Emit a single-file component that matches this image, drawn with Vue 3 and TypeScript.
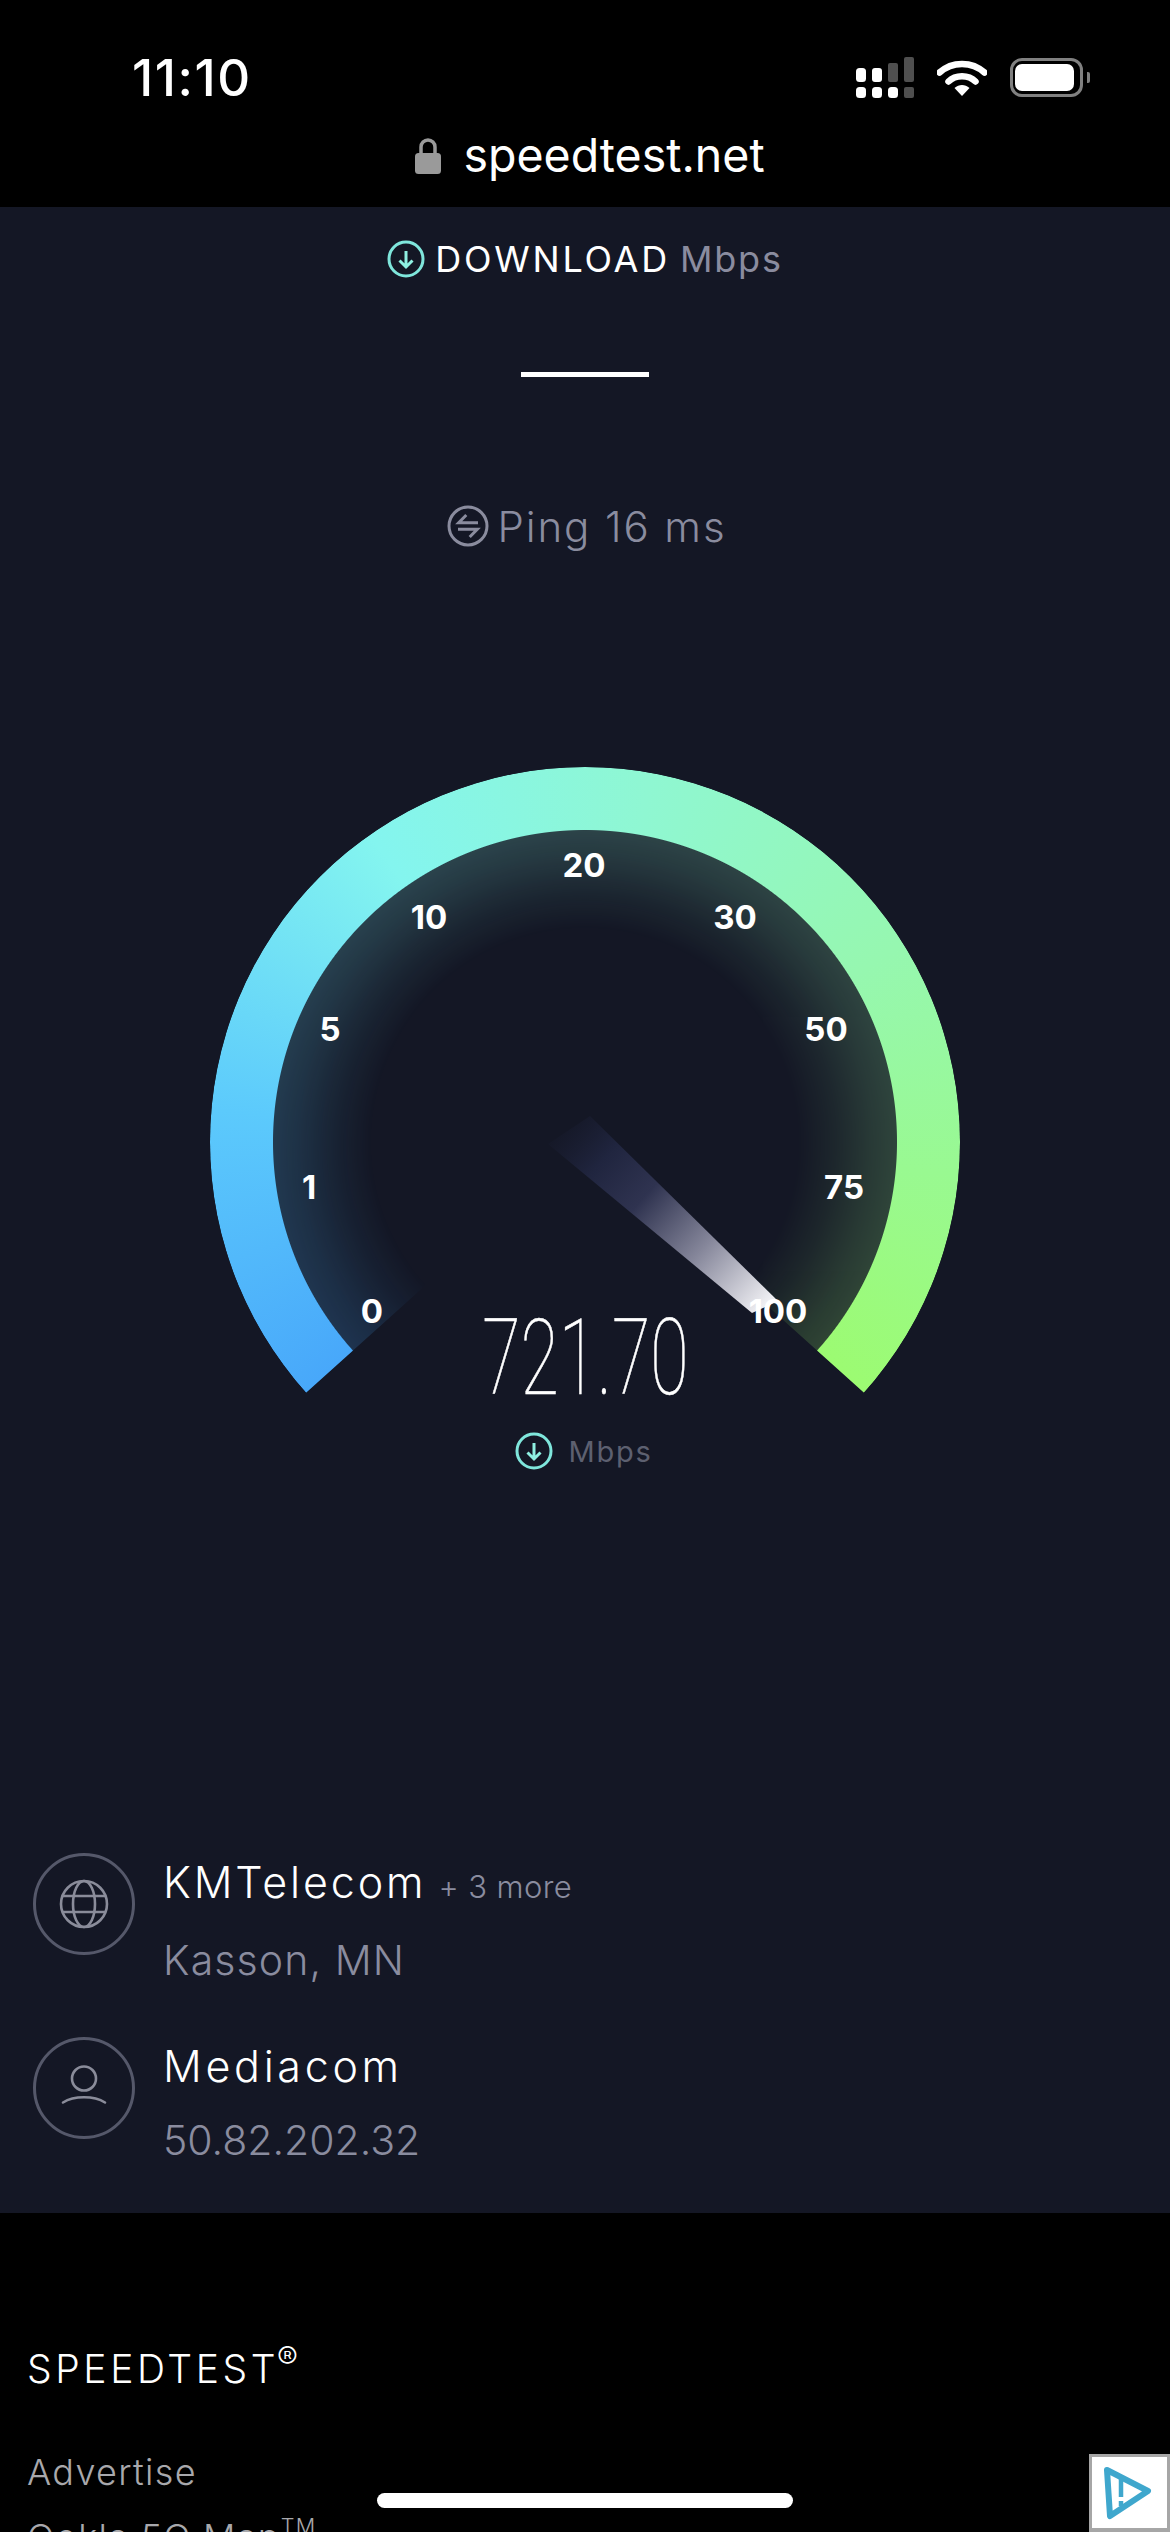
<script setup lang="ts">
import { computed } from 'vue'

interface Tick {
  text: string
  x: number
  y: number
}

// Scale labels, placed by their centre inside the 750px dial box.
const ticks: Tick[] = [
  { text: '0', x: 162, y: 544 },
  { text: '1', x: 99, y: 420 },
  { text: '5', x: 120, y: 262 },
  { text: '10', x: 219, y: 150 },
  { text: '20', x: 374, y: 98 },
  { text: '30', x: 525, y: 150 },
  { text: '50', x: 616, y: 262 },
  { text: '75', x: 634, y: 420 },
  { text: '100', x: 568, y: 544 },
]

const tickStyles = computed(() =>
  ticks.map((t) => ({ left: `${t.x}px`, top: `${t.y}px` })),
)
</script>

<template>
  <div class="screen">
    <header class="chrome">
      <div class="status">
        <span class="time">11:10</span>
        <div class="status-icons">
          <svg class="signal" width="58" height="41" viewBox="0 0 58 41">
            <rect x="0" y="11" width="10" height="14" rx="3.5" fill="#fff" />
            <rect x="16" y="11" width="10" height="14" rx="3" fill="#fff" />
            <rect x="32" y="6" width="10" height="19" rx="2" fill="#4f4f4f" />
            <rect x="48" y="0" width="10" height="25" rx="2" fill="#4f4f4f" />
            <rect x="0" y="30" width="10" height="11" rx="3.5" fill="#fff" />
            <rect x="16" y="30" width="10" height="11" rx="3.5" fill="#fff" />
            <rect x="32" y="30" width="10" height="11" rx="3.5" fill="#fff" />
            <rect x="48" y="30" width="10" height="11" rx="2" fill="#4f4f4f" />
          </svg>
          <svg class="wifi" width="50" height="36" viewBox="0 0 50 36">
            <path d="M2.5 12.5C15 1 35 1 47.5 12.5" fill="none" stroke="#fff" stroke-width="6.5" stroke-linecap="round" />
            <path d="M11.5 21.5C18.5 14.5 31.5 14.5 38.5 21.5" fill="none" stroke="#fff" stroke-width="6.5" stroke-linecap="round" />
            <path d="M17.5 28C22 24 28 24 32.5 28L25 36Z" fill="#fff" />
          </svg>
          <div class="battery">
            <div class="battery-shell"><div class="battery-level"></div></div>
            <div class="battery-nub"></div>
          </div>
        </div>
      </div>
      <div class="address">
        <svg width="26" height="36" viewBox="0 0 26 36">
          <path d="M6 16V9a7 7 0 0 1 14 0v7" fill="none" stroke="#9a9a9a" stroke-width="3.5" />
          <rect x="0" y="15" width="26" height="21" rx="3.5" fill="#9a9a9a" />
        </svg>
        <span>speedtest.net</span>
      </div>
    </header>

    <main class="panel">
      <div class="metric-title">
        <svg width="38" height="38" viewBox="-19 -19 38 38">
          <circle r="17" fill="none" stroke="#7fe6dc" stroke-width="3" />
          <path d="M0-8V8M-6.5 1.5 0 8l6.5-6.5" fill="none" stroke="#8ff0e2" stroke-width="3" />
        </svg>
        <span class="title-main">DOWNLOAD</span>
        <span class="title-unit">Mbps</span>
      </div>

      <div class="dash"></div>

      <div class="ping">
        <svg width="42" height="42" viewBox="-21 -21 42 42">
          <circle r="19" fill="none" stroke="#8a8c9e" stroke-width="3" />
          <path d="M10-3.3H-9.3L-1.7-11M-10 3.3H9.3L1.7 11" fill="none" stroke="#8a8c9e" stroke-width="3" />
        </svg>
        <span>Ping 16 ms</span>
      </div>

      <section class="gauge">
        <div class="dial">
          <div class="glow"></div>
          <div class="arc"></div>
          <svg class="needle" width="750" height="650" viewBox="0 0 750 650">
            <defs>
              <linearGradient id="needle-fade" gradientUnits="userSpaceOnUse" x1="345" y1="355" x2="552" y2="540">
                <stop offset="0" stop-color="#1b1f35" stop-opacity="0" />
                <stop offset="0.22" stop-color="#20253f" />
                <stop offset="0.42" stop-color="#2f3350" />
                <stop offset="0.7" stop-color="#85869a" />
                <stop offset="1" stop-color="#eeeef2" />
              </linearGradient>
            </defs>
            <polygon points="380,349 568,534 542,546 338,377" fill="url(#needle-fade)" />
          </svg>
          <span
            v-for="(tick, i) in ticks"
            :key="tick.text"
            class="tick"
            :style="tickStyles[i]"
          >{{ tick.text }}</span>
        </div>
        <div class="reading">721.70</div>
        <div class="reading-unit">
          <svg width="38" height="38" viewBox="-19 -19 38 38">
            <circle r="17" fill="none" stroke="#7fe6dc" stroke-width="3" />
            <path d="M0-8V8M-6.5 1.5 0 8l6.5-6.5" fill="none" stroke="#8ff0e2" stroke-width="3" />
          </svg>
          <span>Mbps</span>
        </div>
      </section>

      <section class="connection">
        <div class="conn-row">
          <div class="conn-icon">
            <svg width="50" height="50" viewBox="-25 -25 50 50" fill="none" stroke="#8a8c9a" stroke-width="2.6">
              <circle r="23" />
              <ellipse rx="11" ry="23" />
              <path d="M-21-8H21M-21 8H21" />
            </svg>
          </div>
          <div class="conn-text">
            <div class="conn-name">KMTelecom <small>+ 3 more</small></div>
            <div class="conn-sub">Kasson, MN</div>
          </div>
        </div>
        <div class="conn-row">
          <div class="conn-icon">
            <svg width="46" height="46" viewBox="-23 -23 46 46" fill="none" stroke="#8a8c9a" stroke-width="2.6">
              <circle cy="-9.5" r="12" />
              <path d="M-21 14.5C-10 7.5 10 7.5 21 14.5" stroke-linecap="round" />
            </svg>
          </div>
          <div class="conn-text">
            <div class="conn-name media">Mediacom</div>
            <div class="conn-sub address-ip">50.82.202.32</div>
          </div>
        </div>
      </section>
    </main>

    <footer class="site-footer">
      <div class="brand">SPEEDTEST<sup>®</sup></div>
      <a class="foot-link">Advertise</a>
      <a class="foot-link">Ookla 5G Map<sup>TM</sup></a>
    </footer>

    <div class="home-bar"></div>
    <div class="ad-badge">
      <svg width="52" height="54" viewBox="0 0 52 54" fill="none">
        <path d="M6 4 47 25 9 50Z" stroke="#3fa7cd" stroke-width="6" stroke-linejoin="round" />
        <path d="M20 13V31M20 35V40" stroke="#3fa7cd" stroke-width="4.5" />
      </svg>
    </div>
  </div>
</template>

<style scoped>
.screen {
  position: relative;
  width: 1170px;
  height: 2532px;
  overflow: hidden;
  background: #000;
  color: #fff;
  font-family: Inter, "Liberation Sans", sans-serif;
}

/* Browser chrome */
.chrome {
  height: 207px;
  display: flex;
  flex-direction: column;
}
.status {
  height: 126px;
  padding: 45px 80px 0 132px;
  box-sizing: border-box;
  display: flex;
  justify-content: space-between;
  align-items: flex-start;
}
.time {
  font-size: 51px;
  font-weight: 500;
  line-height: 66px;
  letter-spacing: 1.6px;
}
.status-icons {
  display: flex;
  align-items: flex-start;
  margin-top: 12px;
}
.wifi {
  margin: 3px 0 0 23px;
}
.battery {
  display: flex;
  align-items: center;
  margin: 1px 0 0 23px;
}
.battery-shell {
  width: 73px;
  height: 39px;
  box-sizing: border-box;
  border: 3px solid #808080;
  border-radius: 12px;
  padding: 3px 6px 3px 2px;
}
.battery-level {
  height: 100%;
  background: #fff;
  border-radius: 7px;
}
.battery-nub {
  width: 3px;
  height: 11px;
  margin-left: 4px;
  background: #808080;
  border-radius: 0 2px 2px 0;
}
.address {
  display: flex;
  justify-content: center;
  align-items: center;
  gap: 22px;
  font-size: 46.5px;
  line-height: 60px;
  margin-top: -1px;
  padding-left: 10px;
}
.address svg {
  margin-top: 2px;
}

/* Result panel */
.panel {
  height: 2006px;
  background: #141725;
  display: flex;
  flex-direction: column;
  align-items: center;
}
.metric-title {
  display: flex;
  align-items: center;
  margin-top: 30px;
  height: 44px;
  font-size: 36px;
  font-weight: 400;
  white-space: nowrap;
}
.metric-title svg {
  margin-right: 10px;
}
.title-main {
  letter-spacing: 2.75px;
}
.title-unit {
  color: #8a8c9f;
  margin-left: 10px;
  letter-spacing: 1.8px;
}
.dash {
  width: 128px;
  height: 5px;
  margin-top: 91px;
  background: #fff;
}
.ping {
  display: flex;
  align-items: center;
  gap: 9px;
  margin-top: 125px;
  height: 48px;
  padding-left: 3px;
  font-size: 42px;
  font-weight: 300;
  letter-spacing: 1.9px;
  color: #8a8c9f;
}

/* Gauge */
.gauge {
  width: 750px;
  height: 712px;
  margin-top: 217px;
  display: flex;
  flex-direction: column;
  align-items: center;
  position: relative;
}
.dial {
  position: absolute;
  left: 0;
  top: 0;
  width: 750px;
  height: 750px;
}
.arc,
.glow {
  position: absolute;
  inset: 0;
  border-radius: 50%;
  background: conic-gradient(
    from 225deg,
    #48a8fa 0deg,
    #48a8fa 3.3deg,
    #5ccafc 50deg,
    #84f5ef 100deg,
    #8ff7d2 145deg,
    #96f7b0 193deg,
    #9cfb72 266.7deg
  );
  clip-path: polygon(50% 50%, 0 712px, 0 0, 100% 0, 100% 712px);
}
.arc {
  -webkit-mask-image: radial-gradient(circle closest-side, transparent 311.5px, #000 312.5px);
  mask-image: radial-gradient(circle closest-side, transparent 311.5px, #000 312.5px);
}
.glow {
  opacity: 0.2;
  -webkit-mask-image: radial-gradient(
    circle closest-side,
    transparent 212px,
    rgba(0, 0, 0, 0.35) 250px,
    rgba(0, 0, 0, 0.75) 285px,
    #000 312px
  );
  mask-image: radial-gradient(
    circle closest-side,
    transparent 212px,
    rgba(0, 0, 0, 0.35) 250px,
    rgba(0, 0, 0, 0.75) 285px,
    #000 312px
  );
}
.needle {
  position: absolute;
  left: 0;
  top: 0;
}
.tick {
  position: absolute;
  transform: translate(-50%, -50%);
  font-size: 33px;
  font-weight: 700;
  line-height: 1;
}
.reading {
  margin-top: 549px;
  height: 84px;
  font-family: Roboto, "Liberation Sans", sans-serif;
  font-size: 106px;
  font-weight: 100;
  line-height: 84px;
  -webkit-text-stroke: 0.6px #fff;
  transform: scaleX(0.66);
  white-space: nowrap;
  position: relative;
}
.reading-unit {
  display: flex;
  align-items: center;
  gap: 15px;
  margin-top: 32px;
  height: 38px;
  font-size: 29px;
  letter-spacing: 1.8px;
  color: #5d6070;
  position: relative;
  margin-right: 2px;
}

/* Provider and client details */
.connection {
  align-self: stretch;
  margin-top: 374px;
  padding-left: 33px;
  display: flex;
  flex-direction: column;
  gap: 81px;
}
.conn-row {
  display: flex;
  align-items: flex-start;
  gap: 28px;
  height: 103px;
}
.conn-icon {
  flex: none;
  width: 102px;
  height: 102px;
  box-sizing: border-box;
  border: 3px solid #55586a;
  border-radius: 50%;
  display: flex;
  align-items: center;
  justify-content: center;
}
.conn-name {
  font-size: 43px;
  font-weight: 300;
  line-height: 50px;
  margin-top: 4px;
  letter-spacing: 2.9px;
  white-space: nowrap;
}
.conn-name.media {
  letter-spacing: 3.7px;
}
.conn-name small {
  font-size: 31px;
  font-weight: 300;
  letter-spacing: 0.4px;
  color: #8a8c9f;
  margin-left: -3px;
}
.conn-sub {
  font-size: 41px;
  font-weight: 300;
  line-height: 50px;
  margin-top: 23px;
  letter-spacing: 1.1px;
  color: #8a8c9f;
  white-space: nowrap;
}
.conn-sub.address-ip {
  margin-top: 24px;
  letter-spacing: 0;
}

/* Site footer */
.site-footer {
  display: flex;
  flex-direction: column;
  align-items: flex-start;
  padding: 132px 0 0 27px;
  font-weight: 300;
}
.brand {
  font-size: 39px;
  line-height: 48px;
  letter-spacing: 3.6px;
}
.brand sup {
  font-size: 0.8em;
  line-height: 0;
  letter-spacing: 0;
  margin-left: -2px;
  vertical-align: 0.45em;
}
.foot-link {
  margin-top: 55px;
  font-size: 36px;
  line-height: 48px;
  letter-spacing: 1.3px;
  color: #a8a8ac;
}
.foot-link sup {
  font-size: 0.6em;
  line-height: 0;
  vertical-align: 0.75em;
}
.foot-link + .foot-link {
  margin-top: 17px;
}

/* Overlays pinned to the viewport */
.home-bar {
  position: absolute;
  left: 377px;
  top: 2493px;
  width: 416px;
  height: 15px;
  border-radius: 8px;
  background: #fff;
}
.ad-badge {
  position: absolute;
  right: 0;
  top: 2454px;
  width: 81px;
  height: 78px;
  box-sizing: border-box;
  border: 3px solid #a6a6a6;
  border-bottom-width: 4px;
  background: #fff;
  display: flex;
  align-items: center;
  justify-content: center;
  padding: 0 6px 0 0;
}
</style>

<style>
html,
body {
  margin: 0;
  background: #000;
}
</style>
